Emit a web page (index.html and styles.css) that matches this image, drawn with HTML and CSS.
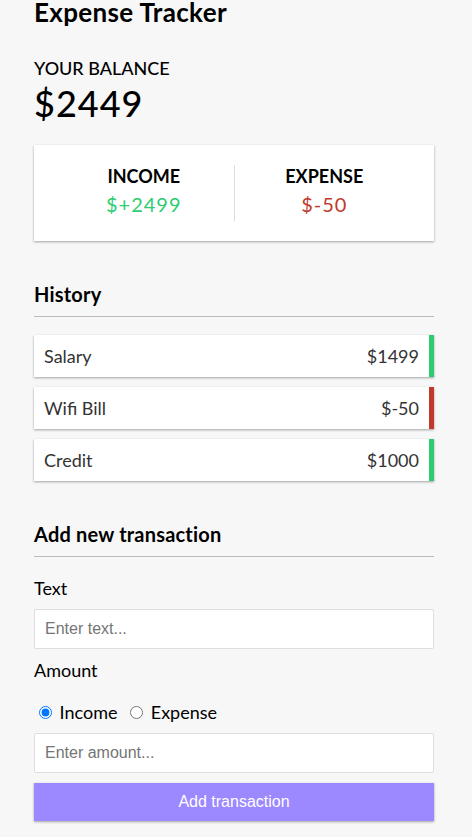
FILE: index.html
```html
<!DOCTYPE html>
<html lang="en">
<head>
<meta charset="UTF-8">
<title>Expense Tracker</title>
<link rel="stylesheet" href="styles.css">
</head>
<body>
  <div class="container">
    <h2 class="title">Expense Tracker</h2>

    <h4 class="balance-label">Your Balance</h4>
    <h1 class="balance">$2449</h1>

    <div class="inc-exp-container">
      <div>
        <h4>Income</h4>
        <p class="money plus">$+2499</p>
      </div>
      <div>
        <h4>Expense</h4>
        <p class="money minus">$-50</p>
      </div>
    </div>

    <h3>History</h3>
    <ul class="list">
      <li class="plus">Salary <span>$1499</span></li>
      <li class="minus">Wifi Bill <span>$-50</span></li>
      <li class="plus">Credit <span>$1000</span></li>
    </ul>

    <h3>Add new transaction</h3>
    <form class="form">
      <div class="form-control">
        <label for="text">Text</label>
        <input type="text" id="text" placeholder="Enter text...">
      </div>
      <div class="form-control">
        <label for="amount">Amount</label>
        <div class="radio-group">
          <label class="radio"><input type="radio" name="type" checked> Income</label>
          <label class="radio"><input type="radio" name="type"> Expense</label>
        </div>
        <input type="number" id="amount" placeholder="Enter amount...">
      </div>
      <button class="btn" type="button">Add transaction</button>
    </form>
  </div>
</body>
</html>
```

FILE: styles.css
```css
* {
  box-sizing: border-box;
}

body {
  margin: 0;
  background-color: #f7f7f7;
  font-family: Lato, "Open Sans", sans-serif;
  font-size: 18px;
  color: #000;
}

.container {
  width: 400px;
  margin: 0 0 0 34px;
}

.title {
  font-size: 26px;
  line-height: 24px;
  font-weight: 700;
  letter-spacing: 0.35px;
  margin: 0;
}

h4 {
  margin: 0;
  text-transform: uppercase;
}

.balance-label {
  font-size: 18px;
  font-weight: 500;
  margin-top: 33px;
}

.balance {
  font-size: 36px;
  font-weight: 500;
  letter-spacing: 1px;
  margin: 2px 0 0;
}

.inc-exp-container {
  background-color: #fff;
  box-shadow: 0 1px 3px rgba(0, 0, 0, 0.12), 0 1px 2px rgba(0, 0, 0, 0.24);
  padding: 20px;
  display: flex;
  justify-content: space-between;
  margin: 20px 0;
}

.inc-exp-container > div {
  flex: 1;
  text-align: center;
}

.inc-exp-container > div:first-of-type {
  border-right: 1px solid #dedede;
}

.money {
  font-size: 20px;
  letter-spacing: 1px;
  margin: 5px 0;
}

.money.plus {
  color: #2ecc71;
}

.money.minus {
  color: #c0392b;
}

h3 {
  font-size: 20px;
  letter-spacing: 0.2px;
  border-bottom: 1px solid #bbb;
  padding-bottom: 10px;
  margin: 41px 0 10px;
}

.list {
  list-style-type: none;
  padding: 0;
  margin: 18px 0 41px;
}

.list li {
  background-color: #fff;
  box-shadow: 0 1px 3px rgba(0, 0, 0, 0.12), 0 1px 2px rgba(0, 0, 0, 0.24);
  color: #333;
  display: flex;
  justify-content: space-between;
  padding: 10px;
  margin: 10px 0;
}

.list li.plus {
  border-right: 5px solid #2ecc71;
}

.list li.minus {
  border-right: 5px solid #c0392b;
}

.form {
  margin: 0;
}

label {
  display: inline-block;
  margin: 10px 0;
}

.radio {
  margin: 10px 3px 10px 0;
}

.radio input {
  margin: 3px 3px 0 5px;
}

input[type="text"],
input[type="number"] {
  border: 1px solid #dedede;
  border-radius: 2px;
  display: block;
  font-family: "Liberation Sans", Arial, sans-serif;
  font-size: 16px;
  padding: 10px;
  width: 100%;
  background: #fff;
}

input::placeholder {
  color: #757575;
}

.btn {
  background-color: #9c88ff;
  box-shadow: 0 1px 3px rgba(0, 0, 0, 0.12), 0 1px 2px rgba(0, 0, 0, 0.24);
  color: #fff;
  border: 0;
  display: block;
  font-family: "Liberation Sans", Arial, sans-serif;
  font-size: 16px;
  margin: 10px 0 30px;
  padding: 10px;
  width: 100%;
}
```
